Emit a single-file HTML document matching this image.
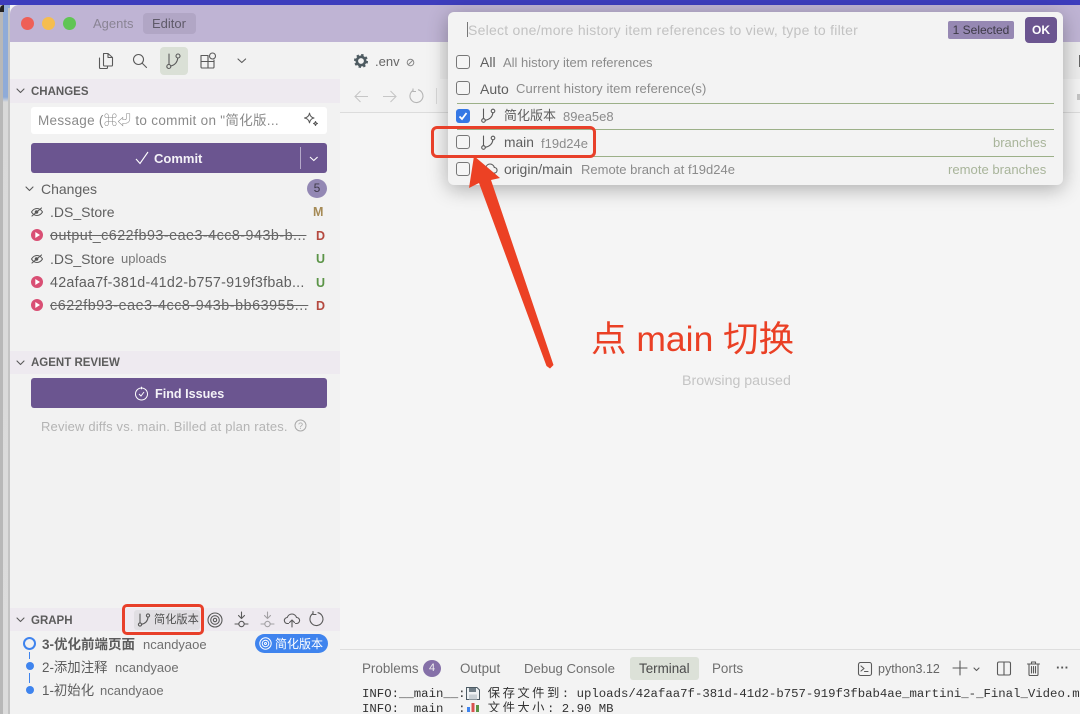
<!DOCTYPE html>
<html><head><meta charset="utf-8"><style>
html,body{margin:0;padding:0;width:1080px;height:714px;overflow:hidden;background:#f5f5f5}
body{position:relative;font-family:"Liberation Sans","Noto Sans CJK SC",sans-serif;color:#555}
.a{position:absolute;white-space:nowrap}
.t{position:absolute;white-space:nowrap;line-height:18px;height:18px}
svg{position:absolute;overflow:visible}
.s{fill:none;stroke:#5a5a5a;stroke-width:1.1;stroke-linecap:round;stroke-linejoin:round}
.cb{position:absolute;left:456px;width:12px;height:12px;border:1px solid #777;border-radius:3px;background:#f5f5f5}
.dv{position:absolute;left:457px;width:597px;height:1px;background:#9cb088}
.gr{color:#8b8b8b}
.st{text-decoration:line-through}
.hd{position:absolute;left:10px;width:330px;background:#eeeaf0}
.ht{font-weight:bold;font-size:11.500px;color:#5c5c5c}
.btn{position:absolute;left:31px;width:296px;background:#6b5590;border-radius:3px;color:#fff}
.bt{font-size:13.400px;color:#6f6f6f}
</style></head><body>
<!-- desktop edge -->
<div class="a" style="left:0;top:0;width:1080px;height:5px;background:#3d3dbd"></div>
<div class="a" style="left:0;top:5px;width:3px;height:709px;background:#b8b8b8"></div>
<div class="a" style="left:3px;top:5px;width:7px;height:709px;background:linear-gradient(#8fabd8 0,#8fabd8 92px,#d9d9d9 97px,#dcdcdc)"></div>
<div class="a" style="left:0;top:5px;width:4px;height:7px;background:#222;border-top-left-radius:4px"></div>
<div class="a" style="left:8px;top:8px;width:2px;height:706px;background:#c4c4c4"></div>
<!-- title bar -->
<div class="a" style="left:10px;top:5px;width:1070px;height:37px;background:#bfb4d4;border-top-left-radius:9px"></div>
<div class="a" style="left:21px;top:17px;width:13px;height:13px;border-radius:50%;background:#ee5f57"></div>
<div class="a" style="left:42px;top:17px;width:13px;height:13px;border-radius:50%;background:#f5bd4f"></div>
<div class="a" style="left:63px;top:17px;width:13px;height:13px;border-radius:50%;background:#60c554"></div>
<div class="t" style="left:93px;top:15px;font-size:13px;color:#8a8494">Agents</div>
<div class="a" style="left:143px;top:13px;width:53px;height:21px;border-radius:4px;background:#b1a6c5"></div>
<div class="t" style="left:152px;top:15px;font-size:13px;color:#5f5a69">Editor</div>
<!-- sidebar -->
<div class="a" style="left:10px;top:42px;width:330px;height:672px;background:#f2f2f2"></div>
<div class="a" style="left:160px;top:47px;width:28px;height:28px;border-radius:4px;background:#dae0d6"></div>
<svg style="left:98px;top:52px" width="18" height="18" viewBox="0 0 18 18"><path class="s" d="M1.500 6V15.500a1 1 0 0 0 1 1h6a1 1 0 0 0 1-1V14M5.500 1.500h4.500L14.500 5.500V13a1 1 0 0 1-1 1h-7a1 1 0 0 1-1-1V2.500a1 1 0 0 1 1-1zM10 1.500V5.500H14.500"/></svg>
<svg style="left:132px;top:53px" width="16" height="16" viewBox="0 0 16 16"><circle class="s" cx="6.500" cy="6.500" r="5"/><path class="s" d="M10.500 10.500L14.500 14.500"/></svg>
<svg style="left:166px;top:53px" width="16" height="16" viewBox="0 0 16 16"><circle class="s" cx="2.800" cy="13.500" r="2"/><circle class="s" cx="12" cy="3" r="2"/><path class="s" d="M3 11.500V1M4.800 13c4 -1 6.500 -3.500 7-8"/></svg>
<svg style="left:200px;top:52px" width="18" height="18" viewBox="0 0 18 18"><path class="s" d="M1 3.500H8V16H2a1 1 0 0 1-1-1zM1 9.500H14V15a1 1 0 0 1-1 1H8"/><path class="s" d="M8 3.500V9.500M14 9.500V8"/><circle class="s" cx="12.500" cy="4" r="3"/></svg>
<svg style="left:237px;top:58px" width="10" height="6" viewBox="0 0 10 6"><path class="s" d="M1 1l3.800 3.500L8.600 1"/></svg>

<div class="hd" style="top:79px;height:24px"></div>
<svg style="left:16px;top:88px" width="9" height="6" viewBox="0 0 9 6"><path class="s" d="M1 1l3.500 3.500L8 1"/></svg>
<div class="t ht" style="left:31px;top:83px">CHANGES</div>
<div class="a" style="left:31px;top:107px;width:296px;height:27px;background:#fff;border-radius:3px"></div>
<div class="t" style="left:38px;top:112px;font-size:13.500px;color:#8a8a8a;letter-spacing:.3px">Message (⌘⏎ to commit on "简化版...</div>
<svg style="left:303px;top:112px" width="16" height="16" viewBox="0 0 16 16"><path class="s" d="M6.500 1.200C7 4 8.500 5.500 11 6 8.500 6.500 7 8 6.500 10.800 6 8 4.500 6.500 1.500 6 4.500 5.500 6 4 6.500 1.200zM12.500 9.500c.2 1.200.8 1.800 2 2-1.200.2-1.800.8-2 2-.2-1.200-.8-1.800-2-2 1.200-.2 1.800-.8 2-2z"/></svg>
<div class="btn" style="top:143px;height:30px"></div>
<svg style="left:135px;top:151px" width="14" height="14" viewBox="0 0 14 14"><path d="M1 8l4 4.500L13 1" fill="none" stroke="#fff" stroke-width="1.100"/></svg>
<div class="t" style="left:154px;top:150px;font-size:13px;font-weight:bold;color:#f4f2f7">Commit</div>
<div class="a" style="left:300px;top:147px;width:1px;height:22px;background:#b5a9c9"></div>
<svg style="left:309px;top:156px" width="10" height="6" viewBox="0 0 10 6"><path d="M1 1l3.800 3.500L8.600 1" fill="none" stroke="#fff" stroke-width="1.100"/></svg>

<svg style="left:25px;top:186px" width="9" height="6" viewBox="0 0 9 6"><path class="s" d="M1 1l3.500 3.500L8 1"/></svg>
<div class="t" style="left:41px;top:180px;font-size:14px;color:#616161">Changes</div>
<div class="a" style="left:307px;top:179px;width:20px;height:19px;border-radius:50%;background:#9388b4;color:#3f3a4a;font-size:12px;line-height:19px;text-align:center">5</div>

<svg style="left:30px;top:206px" width="14" height="12" viewBox="0 0 14 12"><path class="s" d="M1.500 6C3 3.500 5 2.500 7 2.500S11 3.500 12.500 6C11 8.500 9 9.500 7 9.500S3 8.500 1.500 6zM2 10L11.500 2"/><circle cx="6.500" cy="6" r="1.800" fill="#555"/></svg>
<div class="t" style="left:50px;top:203px;font-size:14px;color:#5f5f5f">.DS_Store</div>
<div class="t" style="left:313px;top:203px;font-size:12.500px;font-weight:bold;color:#a58a55">M</div>

<svg style="left:31px;top:229px" width="12" height="12" viewBox="0 0 12 12"><circle cx="6" cy="6" r="6" fill="#d94f74"/><path d="M4.300 3l4.700 3-4.700 3z" fill="#fff"/></svg>
<div class="t st" style="left:50px;top:227px;font-size:14.300px;letter-spacing:.49px;color:#666">output_c622fb93-eae3-4cc8-943b-b...</div>
<div class="t" style="left:316px;top:227px;font-size:12.500px;font-weight:bold;color:#b5493f">D</div>

<svg style="left:30px;top:253px" width="14" height="12" viewBox="0 0 14 12"><path class="s" d="M1.500 6C3 3.500 5 2.500 7 2.500S11 3.500 12.500 6C11 8.500 9 9.500 7 9.500S3 8.500 1.500 6zM2 10L11.500 2"/><circle cx="6.500" cy="6" r="1.800" fill="#555"/></svg>
<div class="t" style="left:50px;top:250px;font-size:14px;color:#5f5f5f">.DS_Store</div>
<div class="t" style="left:121px;top:250px;font-size:13px;color:#777">uploads</div>
<div class="t" style="left:316px;top:250px;font-size:12.500px;font-weight:bold;color:#5b9447">U</div>

<svg style="left:31px;top:276px" width="12" height="12" viewBox="0 0 12 12"><circle cx="6" cy="6" r="6" fill="#d94f74"/><path d="M4.300 3l4.700 3-4.700 3z" fill="#fff"/></svg>
<div class="t" style="left:50px;top:274px;font-size:14.300px;letter-spacing:.25px;color:#5f5f5f">42afaa7f-381d-41d2-b757-919f3fbab...</div>
<div class="t" style="left:316px;top:274px;font-size:12.500px;font-weight:bold;color:#5b9447">U</div>

<svg style="left:31px;top:299px" width="12" height="12" viewBox="0 0 12 12"><circle cx="6" cy="6" r="6" fill="#d94f74"/><path d="M4.300 3l4.700 3-4.700 3z" fill="#fff"/></svg>
<div class="t st" style="left:50px;top:297px;font-size:14.300px;letter-spacing:.56px;color:#666">c622fb93-eae3-4cc8-943b-bb63955...</div>
<div class="t" style="left:316px;top:297px;font-size:12.500px;font-weight:bold;color:#b5493f">D</div>

<div class="hd" style="top:351px;height:23px"></div>
<svg style="left:16px;top:360px" width="9" height="6" viewBox="0 0 9 6"><path class="s" d="M1 1l3.500 3.500L8 1"/></svg>
<div class="t ht" style="left:31px;top:354px">AGENT REVIEW</div>
<div class="btn" style="top:378px;height:30px"></div>
<svg style="left:134px;top:386px" width="15" height="15" viewBox="0 0 15 15"><circle cx="7.500" cy="8" r="6" fill="none" stroke="#fff" stroke-width="1"/><path d="M5 8l2 2 3-4M7.500 .8v2.400" fill="none" stroke="#fff" stroke-width="1"/></svg>
<div class="t" style="left:155px;top:385px;font-size:12.600px;font-weight:bold;color:#f4f2f7">Find Issues</div>
<div class="t" style="left:41px;top:418px;font-size:13px;letter-spacing:.16px;color:#b4b4b4">Review diffs vs. main. Billed at plan rates.</div>
<svg style="left:294px;top:419px" width="13" height="13" viewBox="0 0 13 13"><circle cx="6.500" cy="6.500" r="5.500" fill="none" stroke="#aaa"/><text x="6.500" y="9.800" font-size="9" text-anchor="middle" fill="#aaa" font-family="Liberation Sans">?</text></svg>

<!-- graph -->
<div class="hd" style="top:608px;height:23px"></div>
<svg style="left:16px;top:617px" width="9" height="6" viewBox="0 0 9 6"><path class="s" d="M1 1l3.500 3.500L8 1"/></svg>
<div class="t ht" style="left:31px;top:612px">GRAPH</div>
<div class="a" style="left:134px;top:610px;width:66px;height:20px;border-radius:3px;background:#e1dfe3"></div>
<svg style="left:138px;top:613px" width="13" height="14" viewBox="0 0 13 14"><circle class="s" cx="2" cy="11.500" r="1.600"/><circle class="s" cx="10" cy="2.500" r="1.600"/><path class="s" d="M2 9.800V1M3.600 11.300c3.500-.8 6-3 6.400-7"/></svg>
<div class="t" style="left:154px;top:611px;font-size:11.200px;color:#4f4f4f">简化版本</div>
<svg style="left:207px;top:612px" width="16" height="16" viewBox="0 0 16 16"><circle class="s" cx="8" cy="8" r="7"/><circle class="s" cx="8" cy="8" r="4.300"/><circle class="s" cx="8" cy="8" r="1.700"/></svg>
<svg style="left:234px;top:611px" width="15" height="18" viewBox="0 0 15 18"><path class="s" d="M7.500 1V7M4.500 4.500L7.500 7.500 10.500 4.500M1 13H4.800M10.200 13H14"/><circle class="s" cx="7.500" cy="13" r="2.700"/></svg>
<svg style="left:260px;top:611px;opacity:.5" width="15" height="18" viewBox="0 0 15 18"><path class="s" d="M7.500 1V7M4.500 4.500L7.500 7.500 10.500 4.500M1 13H4.800M10.200 13H14"/><circle class="s" cx="7.500" cy="13" r="2.700"/></svg>
<svg style="left:284px;top:612px" width="16" height="16" viewBox="0 0 16 16"><path class="s" d="M4.500 11.500H3.500a3 3 0 0 1-.3-6C4 3.500 6 2 8 2s4 1.500 4.500 3.500a3 3 0 0 1 .2 6H11.500M8 15V8M5.500 10.500L8 8l2.500 2.500"/></svg>
<svg style="left:309px;top:611px" width="16" height="16" viewBox="0 0 16 16"><path class="s" d="M4 2.500a6.500 6.500 0 1 0 5-.8M4 .5v3h3"/></svg>

<div class="a" style="left:29px;top:652px;width:1px;height:7px;background:#3f84ee"></div>
<div class="a" style="left:29px;top:673px;width:1px;height:10px;background:#3f84ee"></div>
<div class="a" style="left:23px;top:637px;width:9px;height:9px;border:2px solid #3f84ee;border-radius:50%;background:#f2f2f2"></div>
<div class="a" style="left:26px;top:662px;width:8px;height:8px;border-radius:50%;background:#3f84ee"></div>
<div class="a" style="left:26px;top:686px;width:8px;height:8px;border-radius:50%;background:#3f84ee"></div>
<div class="t" style="left:42px;top:636px;font-size:13.500px;font-weight:bold;color:#5c5c5c">3-优化前端页面</div>
<div class="t" style="left:143px;top:636px;font-size:13px;color:#6f6f6f">ncandyaoe</div>
<div class="t" style="left:42px;top:659px;font-size:13.400px;color:#5c5c5c">2-添加注释</div>
<div class="t" style="left:115px;top:659px;font-size:13px;color:#6f6f6f">ncandyaoe</div>
<div class="t" style="left:42px;top:682px;font-size:13.400px;color:#5c5c5c">1-初始化</div>
<div class="t" style="left:100px;top:682px;font-size:13px;color:#6f6f6f">ncandyaoe</div>
<div class="a" style="left:255px;top:634px;width:73px;height:19px;border-radius:10px;background:#3f84ee"></div>
<svg style="left:259px;top:637px" width="13" height="13" viewBox="0 0 13 13"><g fill="none" stroke="#fff"><circle cx="6.500" cy="6.500" r="5.700"/><circle cx="6.500" cy="6.500" r="3.300"/><circle cx="6.500" cy="6.500" r="1"/></g></svg>
<div class="t" style="left:275px;top:635px;font-size:12px;color:#fff">简化版本</div>

<!-- editor -->
<div class="a" style="left:340px;top:42px;width:740px;height:37px;background:#ececec"></div>
<div class="a" style="left:340px;top:42px;width:100px;height:37px;background:#f3f3f3"></div>
<svg style="left:354px;top:54px" width="14" height="14" viewBox="0 0 14 14"><circle cx="7" cy="7" r="4.200" fill="none" stroke="#4d5a60" stroke-width="2.600"/><circle cx="7" cy="7" r="6" fill="none" stroke="#4d5a60" stroke-width="2" stroke-dasharray="2.400 2.312"/></svg>
<div class="t" style="left:375px;top:53px;font-size:13px;color:#666">.env</div>
<svg style="left:406px;top:58px" width="9" height="9" viewBox="0 0 9 9"><circle cx="4.500" cy="4.500" r="3.300" fill="none" stroke="#888"/><path d="M2 7L7 2" stroke="#888"/></svg>
<div class="a" style="left:340px;top:79px;width:740px;height:33px;background:#f3f3f3;border-bottom:1px solid #dcdcdc"></div>
<svg style="left:354px;top:90px" width="15" height="13" viewBox="0 0 15 13"><path d="M14 6.500H1M6.500 1L1 6.500 6.500 12" fill="none" stroke="#c6c6c6" stroke-width="1.100"/></svg>
<svg style="left:382px;top:90px" width="15" height="13" viewBox="0 0 15 13"><path d="M1 6.500H14M8.500 1L14 6.500 8.500 12" fill="none" stroke="#c6c6c6" stroke-width="1.100"/></svg>
<svg style="left:409px;top:88px" width="16" height="16" viewBox="0 0 16 16"><path d="M4 2.500a6.500 6.500 0 1 0 5-.8M4 .5v3h3" fill="none" stroke="#b5b5b5" stroke-width="1.100"/></svg>
<div class="a" style="left:436px;top:88px;width:1px;height:16px;background:#d8d8d8"></div>
<div class="a" style="left:1079px;top:55px;width:1px;height:12px;background:#666"></div>
<div class="a" style="left:1077px;top:94px;width:3px;height:6px;background:#c4c4c4"></div>
<div class="t" style="left:682px;top:372px;font-size:14.200px;color:#c4c4c4">Browsing paused</div>
<div class="t" style="left:591px;top:317px;height:44px;line-height:44px;font-size:35.500px;color:#ea4025">点 main 切换</div>

<!-- bottom panel -->
<div class="a" style="left:340px;top:649px;width:740px;height:65px;background:#f3f3f3;border-top:1px solid #dedede"></div>
<div class="t bt" style="left:362px;top:660px">Problems</div>
<div class="a" style="left:423px;top:660px;width:18px;height:17px;border-radius:50%;background:#8570a8;color:#eee;font-size:11px;line-height:17px;text-align:center">4</div>
<div class="t bt" style="left:460px;top:660px">Output</div>
<div class="t bt" style="left:524px;top:660px;font-size:13.200px">Debug Console</div>
<div class="a" style="left:630px;top:657px;width:69px;height:23px;border-radius:3px;background:#dce1d8"></div>
<div class="t bt" style="left:639px;top:660px;color:#4a4a4a">Terminal</div>
<div class="t bt" style="left:712px;top:660px">Ports</div>
<svg style="left:858px;top:662px" width="14" height="14" viewBox="0 0 14 14"><rect class="s" x=".5" y=".5" width="13" height="13" rx="2"/><path class="s" d="M3 4l3 2.500L3 9M6.500 9.500H10"/></svg>
<div class="t" style="left:878px;top:660px;font-size:12.500px;color:#666">python3.12</div>
<svg style="left:953px;top:661px" width="14" height="14" viewBox="0 0 14 14"><path class="s" d="M7 0V14M0 7H14"/></svg>
<svg style="left:973px;top:667px" width="7" height="5" viewBox="0 0 7 5"><path class="s" d="M1 1l2.500 2.500L6 1"/></svg>
<svg style="left:997px;top:661px" width="15" height="15" viewBox="0 0 15 15"><rect class="s" x=".5" y="1" width="13" height="13" rx="1.500"/><path class="s" d="M7 1V14"/></svg>
<svg style="left:1027px;top:661px" width="13" height="15" viewBox="0 0 13 15"><path class="s" d="M.5 3H12.500M4.500 3V1H8.500V3M2 3V13.500a1 1 0 0 0 1 1H10a1 1 0 0 0 1-1V3M4.500 5.500V12M6.500 5.500V12M8.500 5.500V12"/></svg>
<div class="t" style="left:1056px;top:659px;font-size:13px;color:#555;font-weight:bold">···</div>
<div class="a" style="left:362px;top:687px;width:718px;height:25px;overflow:hidden;font-family:'Liberation Mono','Noto Sans CJK SC',monospace;font-size:12.330px;line-height:15px;color:#333;white-space:pre">INFO:__main__:   <span style="letter-spacing:2.470px">保存文件到</span>: uploads/42afaa7f-381d-41d2-b757-919f3fbab4ae_martini_-_Final_Video.mp4
INFO:__main__:   <span style="letter-spacing:2.470px">文件大小</span>: 2.90 MB</div>
<svg style="left:466px;top:687px" width="14" height="13" viewBox="0 0 14 13"><path d="M.5.500H11L13.500 3V12.500H.5z" fill="#eef1f3" stroke="#4c5a63"/><rect x="3" y="1" width="7" height="4" fill="#6f7d86"/><rect x="3" y="7.500" width="8" height="5" fill="#c9d0d5"/></svg>
<svg style="left:466px;top:702px" width="14" height="10" viewBox="0 0 14 10"><rect width="14" height="10" fill="#f5f5f5"/><rect x="1" y="5" width="3" height="5" fill="#3f84ee"/><rect x="5.500" y="1" width="3" height="9" fill="#d9534f"/><rect x="10" y="3" width="3" height="7" fill="#5b9447"/></svg>

<!-- quick pick -->
<div class="a" style="left:448px;top:12px;width:615px;height:173px;background:#f3f3f3;border-radius:6px;box-shadow:0 4px 20px rgba(0,0,0,.3)"></div>
<div class="a" style="left:467px;top:22px;width:1px;height:15px;background:#777"></div>
<div class="t" style="left:468px;top:21px;font-size:14px;color:#c2c2c2;letter-spacing:.25px">Select one/more history item references to view, type to filter</div>
<div class="a" style="left:948px;top:21px;width:66px;height:18px;border-radius:2px;background:#9688b3;color:#3d3a46;font-size:12px;line-height:18px;text-align:center">1 Selected</div>
<div class="a" style="left:1025px;top:17px;width:32px;height:26px;border-radius:4px;background:#6b5590;color:#fff;font-size:12px;font-weight:bold;line-height:26px;text-align:center">OK</div>

<div class="cb" style="top:55px"></div>
<div class="t" style="left:480px;top:53px;font-size:14px;color:#5f5f5f">All</div>
<div class="t gr" style="left:503px;top:54px;font-size:13px">All history item references</div>
<div class="cb" style="top:81px"></div>
<div class="t" style="left:480px;top:80px;font-size:14px;color:#5f5f5f">Auto</div>
<div class="t gr" style="left:516px;top:80px;font-size:13px;letter-spacing:.1px">Current history item reference(s)</div>
<div class="dv" style="top:103px"></div>
<div class="a" style="left:456px;top:109px;width:14px;height:14px;border-radius:3px;background:#3578e5"></div>
<svg style="left:456px;top:109px" width="14" height="14" viewBox="0 0 14 14"><path d="M3.500 7.500L6 10l4.500-6" fill="none" stroke="#fff" stroke-width="1.800"/></svg>
<svg style="left:481px;top:108px" width="15" height="15" viewBox="0 0 15 15"><circle class="s" cx="2.500" cy="12.500" r="1.800"/><circle class="s" cx="12" cy="3" r="1.800"/><path class="s" d="M2.500 10.500V1M4.300 12.300c4-.8 7-3.300 7.600-7.500"/></svg>
<div class="t" style="left:504px;top:107px;font-size:13px;color:#5f5f5f">简化版本</div>
<div class="t gr" style="left:563px;top:108px;font-size:13px">89ea5e8</div>
<div class="dv" style="top:129px"></div>
<div class="cb" style="top:135px"></div>
<svg style="left:481px;top:135px" width="15" height="15" viewBox="0 0 15 15"><circle class="s" cx="2.500" cy="12.500" r="1.800"/><circle class="s" cx="12" cy="3" r="1.800"/><path class="s" d="M2.500 10.500V1M4.300 12.300c4-.8 7-3.300 7.600-7.500"/></svg>
<div class="t" style="left:504px;top:134px;font-size:13.800px;color:#5f5f5f">main</div>
<div class="t gr" style="left:541px;top:135px;font-size:13px">f19d24e</div>
<div class="t" style="left:993px;top:134px;font-size:13px;color:#a8b49a">branches</div>
<div class="dv" style="top:156px"></div>
<div class="cb" style="top:162px"></div>
<svg style="left:483px;top:162px" width="15" height="13" viewBox="0 0 15 13"><path class="s" d="M4 11H3a2.500 2.500 0 0 1-.3-5C3.200 3.500 5 2 7 2s4 1.500 4.300 3.500a2.800 2.800 0 0 1 .7 5.500H4z"/></svg>
<div class="t" style="left:504px;top:160px;font-size:14px;color:#5f5f5f">origin/main</div>
<div class="t gr" style="left:581px;top:161px;font-size:13px">Remote branch at f19d24e</div>
<div class="t" style="left:948px;top:161px;font-size:13.100px;color:#a8b49a">remote branches</div>

<!-- annotations -->
<div class="a" style="left:431px;top:126px;width:159px;height:26px;border:3px solid #e8402a;border-radius:6px"></div>
<div class="a" style="left:122px;top:604px;width:76px;height:25px;border:3px solid #e8402a;border-radius:5px"></div>
<svg style="left:0;top:0" width="1080" height="714" viewBox="0 0 1080 714"><path d="M474 156L500 178 491 180 553.500 365 550 368.500 546.500 366 479 183 469 188z" fill="#ec4124"/></svg>
</body></html>
